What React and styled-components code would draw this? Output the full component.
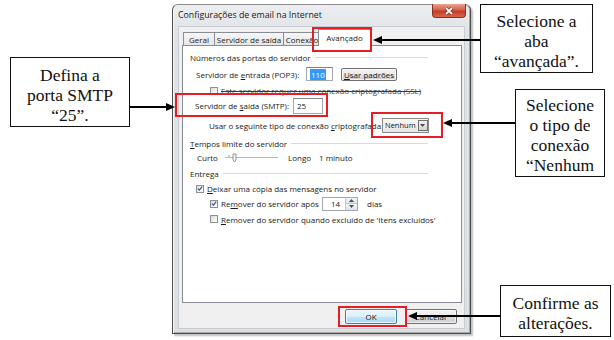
import React from "react";
import styled, { createGlobalStyle } from "styled-components";

const GlobalStyle = createGlobalStyle`
  html, body {
    margin: 0;
    padding: 0;
    background: #ffffff;
    overflow: hidden;
  }
`;

const ui = `"Open Sans", "Noto Sans", "DejaVu Sans", sans-serif`;

const Canvas = styled.div`
  position: relative;
  width: 614px;
  height: 340px;
  overflow: hidden;
  background: #ffffff;
  font-family: ${ui};
`;

// dialog window
const Window = styled.div`
  box-sizing: border-box;
  width: 299px;
  height: 330px;
  margin: 4px 0 0 172px;
  padding: 0 5px 4px 5px;
  display: flex;
  flex-direction: column;
  border: 1px solid #4e4e4e;
  border-top-color: #8c8c8c;
  border-radius: 6px 6px 0 0;
  background: linear-gradient(#eceef1, #dfe2e6 30px, #dcdfe3);
  box-shadow: inset 1px 0 0 #f7f7f7, inset -1px 0 0 #a9a9a9, inset 0 -1px 0 #a9a9a9,
    2px 2px 2px rgba(0, 0, 0, 0.25);
`;

const TitleBar = styled.div`
  height: 21px;
  display: flex;
  justify-content: space-between;
  align-items: flex-start;
  flex: none;
`;

const Title = styled.span`
  font-size: 8.8px;
  color: #1b1b1b;
  line-height: 21px;
  white-space: nowrap;
`;

const CloseButton = styled.div`
  width: 34px;
  height: 14px;
  margin: -1px -1px 0 0;
  display: flex;
  align-items: center;
  justify-content: center;
  box-sizing: border-box;
  border: 1px solid #8b2c1f;
  border-top: none;
  border-radius: 0 0 4px 4px;
  background: linear-gradient(#e8a392, #d5614a 45%, #c43a22 55%, #d9654c);
`;

const Client = styled.div`
  flex: 1;
  display: flex;
  flex-direction: column;
  padding: 3px 3px 0 4px;
  background: #f0f0f0;
  box-shadow: inset 0 0 0 1px #c9ccd1;
`;

const TabStrip = styled.div`
  height: 16px;
  display: flex;
  align-items: flex-end;
  padding-left: 1px;
  position: relative;
  z-index: 1;
`;

const Tab = styled.div`
  box-sizing: border-box;
  width: ${(p) => p.$w}px;
  height: ${(p) => (p.$active ? 17 : 13)}px;
  margin: 0 -1px ${(p) => (p.$active ? -1 : 0)}px ${(p) => (p.$active ? -2 : 0)}px;
  border: 1px solid #898c95;
  border-bottom: none;
  background: ${(p) => (p.$active ? "#ffffff" : "linear-gradient(#f6f6f6, #e6e6e6)")};
  position: relative;
  z-index: ${(p) => (p.$active ? 2 : 0)};
  font-size: 8px;
  color: #1a1a1a;
  display: flex;
  align-items: ${(p) => (p.$active ? "flex-start" : "center")};
  padding-top: ${(p) => (p.$active ? 2 : 0)}px;
  justify-content: center;
  white-space: nowrap;
  overflow: hidden;
`;

const Panel = styled.div`
  box-sizing: border-box;
  height: 258px;
  flex: none;
  background: #ffffff;
  border: 1px solid #898c95;
  padding-top: 4px;
  display: flex;
  flex-direction: column;
  font-size: 8px;
  color: #1a1a1a;
`;

const Row = styled.div`
  height: ${(p) => p.$h}px;
  padding-left: ${(p) => p.$indent}px;
  display: flex;
  align-items: center;
  flex: none;
  white-space: nowrap;
`;

const GroupLine = styled.span`
  flex: 1;
  height: 1px;
  margin: 0 33px 0 4px;
  background: #d5dbe0;
`;

const Label = styled.span`
  flex: none;
  width: ${(p) => (p.$w ? `${p.$w}px` : "auto")};
  margin-left: ${(p) => p.$ml || 0}px;
  white-space: nowrap;
  color: ${(p) => (p.$dim ? "#3a3a3a" : "#1a1a1a")};
  text-decoration: ${(p) => (p.$strike ? "line-through" : "none")};
`;

const TextBox = styled.div`
  box-sizing: border-box;
  width: ${(p) => p.$w}px;
  height: ${(p) => p.$h}px;
  border: 1px solid #a3a7ad;
  border-top-color: #7f838a;
  background: #ffffff;
  display: flex;
  align-items: center;
  padding-left: 3px;
  font-size: 8px;
`;

const Selected = styled.span`
  background: #3399ff;
  color: #ffffff;
  padding: 0 1px;
`;

const PushButton = styled.div`
  box-sizing: border-box;
  width: ${(p) => p.$w}px;
  height: ${(p) => p.$h}px;
  margin-left: ${(p) => p.$ml || 0}px;
  border: 1px solid ${(p) => (p.$focus ? "#3c7fb1" : "#707070")};
  border-radius: 2px;
  background: ${(p) =>
    p.$focus
      ? "linear-gradient(#eaf6fd, #d9f0fc 50%, #bee6fd 51%, #a7d9f5)"
      : "linear-gradient(#f2f2f2, #ebebeb 50%, #dddddd 51%, #cfcfcf)"};
  box-shadow: inset 0 0 0 1px rgba(255, 255, 255, 0.7);
  display: flex;
  align-items: center;
  justify-content: center;
  font-size: 8px;
  color: #1a1a1a;
`;

const Box = styled.span`
  box-sizing: border-box;
  width: 8px;
  height: 8px;
  flex: none;
  margin-right: 3px;
  border: 1px solid #8e8f8f;
  background: linear-gradient(135deg, #dcdcdc, #ffffff);
  display: flex;
  align-items: center;
  justify-content: center;
`;

const Select = styled.div`
  box-sizing: border-box;
  width: 47px;
  height: 15px;
  border: 1px solid #8a8a8a;
  background: linear-gradient(#f6f6f6, #e6e6e6);
  display: flex;
  align-items: center;
  justify-content: space-between;
  padding: 0 1px 0 2px;
  font-size: 7.5px;
  gap: 2px;
`;

const DropArrow = styled.span`
  box-sizing: border-box;
  flex: none;
  width: 10px;
  height: 11px;
  border: 1px solid #707070;
  background: linear-gradient(#f2f2f2, #d4d4d4);
  display: flex;
  align-items: center;
  justify-content: center;
`;

const Spin = styled.div`
  box-sizing: border-box;
  width: 36px;
  height: 14px;
  border: 1px solid #a3a7ad;
  background: #ffffff;
  display: flex;
  align-items: center;
  justify-content: space-between;
  padding-left: 8px;
`;

const SpinButtons = styled.span`
  width: 11px;
  height: 12px;
  display: flex;
  flex-direction: column;
  border-left: 1px solid #c4c8cc;
`;

const SpinHalf = styled.span`
  flex: 1;
  display: flex;
  align-items: center;
  justify-content: center;
  background: linear-gradient(#f3f6f9, #dbe3ea);
  border-bottom: ${(p) => (p.$top ? "1px solid #c4c8cc" : "none")};
`;

const ButtonBar = styled.div`
  display: flex;
  justify-content: flex-end;
  gap: 8px;
  padding: 6px 5px 0 0;
`;

// annotations drawn over the screenshot
const Callout = styled.div`
  position: absolute;
  left: ${(p) => p.$x}px;
  top: ${(p) => p.$y}px;
  width: ${(p) => p.$w}px;
  height: ${(p) => p.$h}px;
  box-sizing: border-box;
  border: 1.5px solid #111111;
  background: #ffffff;
  padding-top: ${(p) => p.$pt}px;
  font-family: "Liberation Serif", "Times New Roman", serif;
  font-size: 17.5px;
  line-height: 20px;
  text-align: center;
  white-space: nowrap;
  color: #111111;
  z-index: 5;
`;

const Highlight = styled.div`
  position: absolute;
  left: ${(p) => p.$x}px;
  top: ${(p) => p.$y}px;
  width: ${(p) => p.$w}px;
  height: ${(p) => p.$h}px;
  box-sizing: border-box;
  border: 2px solid #e41e26;
  z-index: 4;
`;

const ArrowLayer = styled.svg`
  position: absolute;
  left: 0;
  top: 0;
  z-index: 6;
  pointer-events: none;
`;

const Check = () => (
  <svg width="7" height="7" viewBox="0 0 7 7">
    <path d="M1 3.6 L2.8 5.4 L6 1.2" fill="none" stroke="#3d5590" strokeWidth="1.4" />
  </svg>
);

const CheckBox = ({ checked }) => <Box>{checked && <Check />}</Box>;

const Tiny = ({ up }) => (
  <svg width="5" height="3" viewBox="0 0 5 3">
    <path d={up ? "M0 3 L2.5 0 L5 3 Z" : "M0 0 L2.5 3 L5 0 Z"} fill="#4a4a4a" />
  </svg>
);

const Arrow = ({ x1, x2, y }) => {
  const dir = x2 < x1 ? 1 : -1;
  const base = x2 + dir * 9;
  return (
    <g>
      <line x1={x1} y1={y} x2={base} y2={y} stroke="#000" strokeWidth="2.2" />
      <path d={`M${x2} ${y} L${base} ${y - 4} L${base} ${y + 4} Z`} fill="#000" />
    </g>
  );
};

const SliderTrack = () => (
  <svg width="53" height="10" viewBox="0 0 53 10">
    <line x1="0" y1="4.5" x2="53" y2="4.5" stroke="#b9b9b9" strokeWidth="1" />
    <line x1="0" y1="5.5" x2="53" y2="5.5" stroke="#ffffff" strokeWidth="1" />
    <path d="M4 2 L4 4" stroke="#9a9a9a" />
    <path d="M8 1 L11 1 L11 7 L9.5 9 L8 7 Z" fill="#f4f4f4" stroke="#7d7d7d" strokeWidth="0.8" />
  </svg>
);

export default function App() {
  return (
    <Canvas>
      <GlobalStyle />
      <Window>
        <TitleBar>
          <Title>Configurações de email na Internet</Title>
          <CloseButton>
            <svg width="10" height="8" viewBox="0 0 10 8">
              <path d="M2 1 L8 7 M8 1 L2 7" stroke="#6b1a10" strokeWidth="3" />
              <path d="M2 1 L8 7 M8 1 L2 7" stroke="#ffffff" strokeWidth="1.8" />
            </svg>
          </CloseButton>
        </TitleBar>
        <Client>
          <TabStrip>
            <Tab $w={32}>Geral</Tab>
            <Tab $w={70}>Servidor de saída</Tab>
            <Tab $w={38}>Conexão</Tab>
            <Tab $w={53} $active>
              Avançado
            </Tab>
          </TabStrip>
          <Panel>
            <Row $h={14} $indent={7}>
              <Label>Números das portas do servidor</Label>
              <GroupLine />
            </Row>
            <Row $h={20} $indent={13}>
              <Label $w={110}>
                Servidor de <u>e</u>ntrada (POP3):
              </Label>
              <TextBox $w={27} $h={14}>
                <Selected>110</Selected>
              </TextBox>
              <PushButton $w={56} $h={13} $ml={8}>
                <span>
                  <u>U</u>sar padrões
                </span>
              </PushButton>
            </Row>
            <Row $h={13} $indent={27}>
              <CheckBox />
              <Label $dim $strike>
                Este servidor requer uma conexão criptografada (SSL)
              </Label>
            </Row>
            <Row $h={17} $indent={12}>
              <Label $w={98}>
                Servidor de <u>s</u>aída (SMTP):
              </Label>
              <TextBox $w={30} $h={16}>
                25
              </TextBox>
            </Row>
            <Row $h={22} $indent={26}>
              <Label $w={173}>
                Usar o seguinte tipo de conexão <u>c</u>riptografada:
              </Label>
              <Select>
                <span>Nenhum</span>
                <DropArrow>
                  <Tiny />
                </DropArrow>
              </Select>
            </Row>
            <Row $h={14} $indent={7}>
              <Label>
                <u>T</u>empos limite do servidor
              </Label>
              <GroupLine />
            </Row>
            <Row $h={15} $indent={14}>
              <Label $w={28}>Curto</Label>
              <SliderTrack />
              <Label $w={31} $ml={10}>
                Longo
              </Label>
              <Label>1 minuto</Label>
            </Row>
            <Row $h={16} $indent={7}>
              <Label>Entrega</Label>
              <GroupLine />
            </Row>
            <Row $h={15} $indent={13}>
              <CheckBox checked />
              <Label>
                <u>D</u>eixar uma cópia das mensagens no servidor
              </Label>
            </Row>
            <Row $h={15} $indent={27}>
              <CheckBox checked />
              <Label $w={101}>
                Re<u>m</u>over do servidor após
              </Label>
              <Spin>
                <span>14</span>
                <SpinButtons>
                  <SpinHalf $top>
                    <Tiny up />
                  </SpinHalf>
                  <SpinHalf>
                    <Tiny />
                  </SpinHalf>
                </SpinButtons>
              </Spin>
              <Label $ml={9}>dias</Label>
            </Row>
            <Row $h={16} $indent={27}>
              <CheckBox />
              <Label>
                <u>R</u>emover do servidor quando excluído de 'Itens excluídos'
              </Label>
            </Row>
          </Panel>
          <ButtonBar>
            <PushButton $w={52} $h={15} $focus>
              OK
            </PushButton>
            <PushButton $w={52} $h={15}>
              Cancelar
            </PushButton>
          </ButtonBar>
        </Client>
      </Window>

      <Highlight $x={312} $y={27} $w={60} $h={25} />
      <Highlight $x={175} $y={93} $w={153} $h={24} />
      <Highlight $x={371} $y={112} $w={72} $h={26} />
      <Highlight $x={338} $y={306} $w={69} $h={21} />

      <Callout $x={480} $y={4} $w={113} $h={69} $pt={6}>
        Selecione a
        <br />
        aba
        <br />
        “avançada”.
      </Callout>
      <Callout $x={10} $y={57} $w={120} $h={70} $pt={7}>
        Defina a
        <br />
        porta SMTP
        <br />
        “25”.
      </Callout>
      <Callout $x={515} $y={89} $w={90} $h={88} $pt={5}>
        Selecione
        <br />
        o tipo de
        <br />
        conexão
        <br />
        “Nenhum
      </Callout>
      <Callout $x={500} $y={285} $w={111} $h={52} $pt={7}>
        Confirme as
        <br />
        alterações.
      </Callout>

      <ArrowLayer width="614" height="340" viewBox="0 0 614 340">
        <Arrow x1={480} x2={373} y={40} />
        <Arrow x1={130} x2={175} y={107} />
        <Arrow x1={515} x2={443} y={123} />
        <Arrow x1={500} x2={408} y={316} />
      </ArrowLayer>
    </Canvas>
  );
}
